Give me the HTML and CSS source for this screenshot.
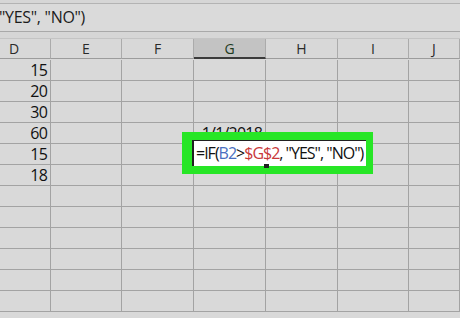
FILE: index.html
```html
<!DOCTYPE html>
<html>
<head>
<meta charset="utf-8">
<link rel="stylesheet" href="styles.css">
</head>
<body>
<div class="app">
  <div class="topstrip"></div>
  <div class="fxbar"><span class="fxtext">"YES", "NO")</span></div>
  <div class="gap"></div>
  <div class="sheet">
    <div class="grid">
      <div class="hd">D</div><div class="hd">E</div><div class="hd">F</div><div class="hd sel">G</div><div class="hd">H</div><div class="hd">I</div><div class="hd">J</div>

      <div class="c num">15</div><div class="c"></div><div class="c"></div><div class="c"></div><div class="c"></div><div class="c"></div><div class="c"></div>
      <div class="c num">20</div><div class="c"></div><div class="c"></div><div class="c"></div><div class="c"></div><div class="c"></div><div class="c"></div>
      <div class="c num">30</div><div class="c"></div><div class="c"></div><div class="c"></div><div class="c"></div><div class="c"></div><div class="c"></div>
      <div class="c num">60</div><div class="c"></div><div class="c"></div><div class="c num">1/1/2018</div><div class="c"></div><div class="c"></div><div class="c"></div>
      <div class="c num">15</div><div class="c"></div><div class="c"></div><div class="c"></div><div class="c"></div><div class="c"></div><div class="c"></div>
      <div class="c num">18</div><div class="c"></div><div class="c"></div><div class="c"></div><div class="c"></div><div class="c"></div><div class="c"></div>
      <div class="c"></div><div class="c"></div><div class="c"></div><div class="c"></div><div class="c"></div><div class="c"></div><div class="c"></div>
      <div class="c"></div><div class="c"></div><div class="c"></div><div class="c"></div><div class="c"></div><div class="c"></div><div class="c"></div>
      <div class="c"></div><div class="c"></div><div class="c"></div><div class="c"></div><div class="c"></div><div class="c"></div><div class="c"></div>
      <div class="c"></div><div class="c"></div><div class="c"></div><div class="c"></div><div class="c"></div><div class="c"></div><div class="c"></div>
      <div class="c"></div><div class="c"></div><div class="c"></div><div class="c"></div><div class="c"></div><div class="c"></div><div class="c"></div>
      <div class="c"></div><div class="c"></div><div class="c"></div><div class="c"></div><div class="c"></div><div class="c"></div><div class="c"></div>
    </div>
    <div class="highlight">
      <div class="editor"><span class="k">=IF(</span><span class="ref-b">B2</span><span class="k">&gt;</span><span class="ref-r">$G$2</span><span class="k">, "YES", "NO")</span><span class="handle"></span></div>
    </div>
  </div>
</div>
</body>
</html>
```

FILE: styles.css
```css
* { box-sizing: border-box; }
html, body { margin: 0; padding: 0; }
body {
  width: 460px;
  height: 318px;
  overflow: hidden;
  background: #d9d9d9;
  font-family: "Open Sans", "Noto Sans", sans-serif;
  color: #1a1a1a;
}
.app { width: 460px; height: 318px; overflow: hidden; }
.topstrip {
  height: 4px;
  border-bottom: 1px solid #b3b3b3;
  background: #d6d6d6;
}
.fxbar {
  height: 28px;
  border-bottom: 1px solid #a9a9a9;
  background: #dadada;
  display: flex;
  align-items: center;
}
.fxtext {
  font-size: 16px;
  letter-spacing: -0.3px;
  color: #1c1c1c;
  margin-left: -1px;
  margin-top: -1px;
}
.gap {
  height: 7px;
  border-bottom: 1px solid #c4c4c4;
  background: #d6d6d6;
}
.sheet { position: relative; }
.grid {
  display: grid;
  grid-template-columns: 51px 71px 72px 72px 72px 71px 1fr;
  grid-auto-rows: 21px;
}
.hd {
  border-right: 1px solid #ababab;
  border-bottom: 1px solid #9c9c9c;
  background: #d8d8d8;
  font-size: 14px;
  color: #2a2a2a;
  text-align: center;
  line-height: 19px;
  height: 20px;
}
.grid > .hd:first-child { text-align: left; padding-left: 9px; }
.hd.sel {
  background: #c3c3c3;
  border-bottom: 2px solid #3b3b3b;
  color: #1e3a1e;
}
.c {
  border-right: 1px solid #a3a3a3;
  border-bottom: 1px solid #a3a3a3;
  background: #d9d9d9;
  font-size: 16px;
  line-height: 21px;
}
.num {
  text-align: right;
  padding-right: 3px;
  letter-spacing: -0.8px;
  color: #111;
}
.highlight {
  position: absolute;
  left: 182px;
  top: 93px;
  width: 191px;
  height: 42px;
  background: #27e626;
  padding: 8px 7px 8px 10px;
}
.editor {
  position: relative;
  height: 26px;
  background: #ffffff;
  border-left: 2px solid #202020;
  border-top: 1px solid #202020;
  font-size: 16px;
  line-height: 24px;
  padding-left: 2px;
  white-space: nowrap;
  letter-spacing: -1px;
  color: #111;
}
.ref-b { color: #4a6fc0; }
.ref-r { color: #c8383a; }
.handle {
  position: absolute;
  left: 70px;
  bottom: -2px;
  width: 5px;
  height: 4px;
  background: #202020;
}
```
